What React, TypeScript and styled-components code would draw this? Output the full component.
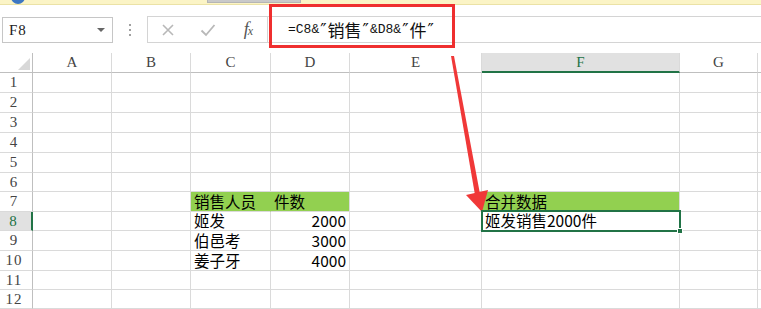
import React from 'react';
import styled, {createGlobalStyle, css} from 'styled-components';

const GlobalStyle = createGlobalStyle`
  html, body {
    margin: 0;
    padding: 0;
    background: #fff;
  }
  body {
    font-family: "Liberation Sans", "Noto Sans CJK SC", sans-serif;
  }
`;

const GREEN = '#217346';
const FILL = '#92d050';
const GRID = '#dadada';
const HEAD_LINE = '#bfbfbf';

const colWidths = [33, 79, 79, 80, 79, 132, 198, 78];
const rowHeights = [20, 20, 20, 20, 20, 19, 20, 19, 20, 20, 19, 19];
const columns = ['A', 'B', 'C', 'D', 'E', 'F', 'G', ''];

type CellData = {
    text: string,
    align?: 'left' | 'right',
    fill?: boolean,
    fillRight?: boolean
}

const data: Record<string, CellData> = {
    C7: {text: '销售人员', fill: true, fillRight: true},
    D7: {text: '件数', fill: true},
    F7: {text: '合并数据', fill: true},
    C8: {text: '姬发'},
    D8: {text: '2000', align: 'right'},
    F8: {text: '姬发销售2000件'},
    C9: {text: '伯邑考'},
    D9: {text: '3000', align: 'right'},
    C10: {text: '姜子牙'},
    D10: {text: '4000', align: 'right'},
};

const Page = styled.div`
  position: relative;
  width: 761px;
  height: 309px;
  overflow: hidden;
  background: #fff;
`;

const MessageStrip = styled.div`
  display: flex;
  align-items: flex-start;
  height: 4px;
  background: #fbf4c6;
  border-bottom: 1px solid #ebe2a6;
`;
const BlueDot = styled.div`
  width: 14px;
  height: 14px;
  margin: -10px 0 0 11px;
  border-radius: 50%;
  background: #3d77c2;
`;
const GreyTab = styled.div`
  width: 92px;
  height: 2px;
  margin-left: 182px;
  background: #c9c9c9;
  border: 1px solid #b5b5b5;
  border-top: none;
`;

const FormulaBar = styled.div`
  display: flex;
  align-items: flex-start;
  height: 37px;
  padding-top: 11px;
  box-sizing: content-box;
`;
const NameBox = styled.div`
  display: flex;
  align-items: center;
  box-sizing: border-box;
  width: 111px;
  height: 26px;
  margin: 1px 0 0 2px;
  padding: 0 7px 0 6px;
  border: 1px solid #c6c6c6;
  font: 15px "Liberation Serif", serif;
  letter-spacing: 1px;
  color: #222;
`;
const DropArrow = styled.div`
  margin-left: auto;
  width: 0;
  height: 0;
  border-left: 4px solid transparent;
  border-right: 4px solid transparent;
  border-top: 4px solid #666;
`;
const Grip = styled.div`
  display: flex;
  flex-direction: column;
  align-items: center;
  justify-content: center;
  gap: 3px;
  width: 34px;
  height: 27px;

  & span {
    width: 2px;
    height: 2px;
    background: #a0a0a0;
  }
`;
const FnBox = styled.div`
  display: grid;
  grid-template-columns: repeat(3, 40px);
  align-items: center;
  justify-items: center;
  box-sizing: border-box;
  width: 120px;
  height: 27px;
  border: 1px solid #d4d4d4;
  border-right: none;
`;
const FxLabel = styled.span`
  font: italic 18px "Liberation Serif", serif;
  color: #555;
  letter-spacing: -1px;

  & small {
    font-size: 12px;
  }
`;
const FormulaInput = styled.div`
  flex: 1;
  display: flex;
  align-items: center;
  box-sizing: border-box;
  height: 27px;
  padding-left: 20px;
  border: 1px solid #d4d4d4;
  border-right: none;
  font: 13px "Liberation Mono", "DejaVu Sans Mono", monospace;
  color: #111;
  white-space: nowrap;
`;
const Han = styled.span`
  font: 17px "Noto Sans CJK SC", sans-serif;
`;
const Quote = styled.span`
  font: 17px "DejaVu Sans", sans-serif;
  margin: 0 1px;
`;

const Highlight = styled.div`
  position: absolute;
  left: 269px;
  top: 4px;
  width: 186px;
  height: 44px;
  box-sizing: border-box;
  border: 3px solid #ef2f2f;
  pointer-events: none;
`;

const Sheet = styled.div`
  display: grid;
  grid-template-columns: ${colWidths.map(w => w + 'px').join(' ')} 1fr;
  grid-template-rows: 20px ${rowHeights.map(h => h + 'px').join(' ')};
`;
const Corner = styled.div`
  display: flex;
  align-items: flex-end;
  justify-content: flex-end;
  box-sizing: border-box;
  padding: 0 2px 2px 0;
  border-right: 1px solid ${HEAD_LINE};
  border-bottom: 1px solid ${HEAD_LINE};
`;
const CornerMark = styled.div`
  width: 0;
  height: 0;
  border-left: 12px solid transparent;
  border-bottom: 12px solid #d8d8d8;
`;
const ColHead = styled.div<{ $active?: boolean }>`
  display: flex;
  align-items: center;
  justify-content: center;
  box-sizing: border-box;
  border-right: 1px solid ${GRID};
  border-bottom: 1px solid ${HEAD_LINE};
  font: 15px "Liberation Serif", serif;
  color: #444;
  ${p => p.$active && css`
    background: #e1e1e1;
    color: ${GREEN};
    border-bottom: 2px solid ${GREEN};
  `}
`;
const RowHead = styled.div<{ $active?: boolean }>`
  display: flex;
  align-items: center;
  justify-content: center;
  box-sizing: border-box;
  padding-right: 4px;
  border-right: 1px solid ${HEAD_LINE};
  border-bottom: 1px solid ${GRID};
  font: 15px "Liberation Serif", serif;
  letter-spacing: 1px;
  color: #444;
  ${p => p.$active && css`
    background: #e1e1e1;
    color: ${GREEN};
    border-right: 2px solid ${GREEN};
  `}
`;
const Cell = styled.div<{ $fill?: boolean, $fillRight?: boolean, $align?: string, $selected?: boolean }>`
  position: relative;
  display: flex;
  align-items: center;
  justify-content: ${p => p.$align === 'right' ? 'flex-end' : 'flex-start'};
  box-sizing: border-box;
  padding: 0 3px 0 3px;
  border-right: 1px solid ${p => p.$fillRight ? FILL : GRID};
  border-bottom: 1px solid ${GRID};
  background: ${p => p.$fill ? FILL : '#fff'};
  font: 15.5px/1 "Noto Sans CJK SC", sans-serif;
  color: #000;
  white-space: nowrap;
  ${p => p.$selected && css`
    z-index: 2;
    &::after {
      content: '';
      position: absolute;
      left: -1px;
      top: -2px;
      right: -2px;
      bottom: -2px;
      border: 2px solid ${GREEN};
    }
    &::before {
      content: '';
      position: absolute;
      right: -4px;
      bottom: -4px;
      width: 6px;
      height: 6px;
      background: ${GREEN};
      border: 1px solid #fff;
      box-sizing: border-box;
      z-index: 3;
    }
  `}
`;

const ArrowLayer = styled.svg`
  position: absolute;
  left: 0;
  top: 0;
  pointer-events: none;
`;

function XIcon() {
    return (
        <svg width="14" height="14" viewBox="0 0 14 14">
            <path d="M2 2 L12 12 M12 2 L2 12" stroke="#b8b8b8" strokeWidth="1.6" fill="none"/>
        </svg>
    )
}

function CheckIcon() {
    return (
        <svg width="16" height="14" viewBox="0 0 16 14">
            <path d="M1.5 7.5 L6 12 L14.5 2" stroke="#b8b8b8" strokeWidth="1.8" fill="none"/>
        </svg>
    )
}

function Row({row}: { row: number }) {
    return (
        <>
            <RowHead $active={row === 8}>{row}</RowHead>
            {columns.map((col, i) => {
                const cell = data[col + row];
                return (
                    <Cell key={i}
                          $fill={cell?.fill}
                          $fillRight={cell?.fillRight}
                          $align={cell?.align}
                          $selected={col === 'F' && row === 8}>
                        {cell?.text}
                    </Cell>
                )
            })}
        </>
    )
}

export default function App() {
    return (
        <Page>
            <GlobalStyle/>
            <MessageStrip>
                <BlueDot/>
                <GreyTab/>
            </MessageStrip>

            <FormulaBar>
                <NameBox>F8<DropArrow/></NameBox>
                <Grip><span/><span/><span/></Grip>
                <FnBox>
                    <XIcon/>
                    <CheckIcon/>
                    <FxLabel>f<small>x</small></FxLabel>
                </FnBox>
                <FormulaInput>
                    =C8&amp;<Quote>″</Quote><Han>销售</Han><Quote>″</Quote>&amp;D8&amp;<Quote>″</Quote><Han>件</Han><Quote>″</Quote>
                </FormulaInput>
            </FormulaBar>

            <Sheet>
                <Corner><CornerMark/></Corner>
                {columns.map((col, i) => (
                    <ColHead key={i} $active={col === 'F'}>{col}</ColHead>
                ))}
                {rowHeights.map((_, i) => <Row key={i} row={i + 1}/>)}
            </Sheet>

            <Highlight/>
            <ArrowLayer width="761" height="309" viewBox="0 0 761 309">
                <polygon points="451,56 454,56 480,194 475,195" fill="#f03838"/>
                <polygon points="482,212 466,195 488,190" fill="#f03838"/>
            </ArrowLayer>
        </Page>
    );
}
